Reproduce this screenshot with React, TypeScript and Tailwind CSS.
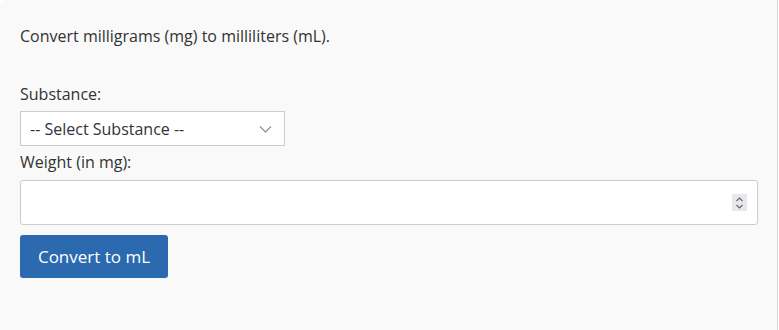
export default function App() {
  return (
    <div className="h-[330px] w-[779px] bg-white font-['Open_Sans',sans-serif] text-[#333]">
      <div className="h-full w-[778px] rounded-tl-md border-r border-[#d8d8d8] bg-[#f9f9f9] px-5 pt-6">
        <p className="mb-[34px] text-base leading-6">Convert milligrams (mg) to milliliters (mL).</p>
        <label className="block text-base leading-6">Substance:</label>
        <div className="relative mt-[5px] h-[35px] w-[265px] border border-[#ccc] bg-white">
          <span className="block px-[9px] pt-[2px] text-base leading-[31px]">-- Select Substance --</span>
          <svg className="absolute right-[12px] top-[13px]" width="13" height="9" viewBox="0 0 13 9">
            <path d="M1 1.5 L6.5 7 L12 1.5" fill="none" stroke="#9a9a9a" strokeWidth="1.4" />
          </svg>
        </div>
        <label className="mt-1 block text-base leading-6">Weight (in mg):</label>
        <div className="relative mt-[6px] h-[45px] w-[738px] rounded-[3px] border border-[#ccc] bg-white">
          <input type="text" className="h-full w-full bg-transparent px-3 outline-none" />
          <div className="absolute right-[10px] top-[13px] flex h-[17px] w-[15px] flex-col items-center justify-center bg-[#e8e8ec]">
            <svg width="9" height="14" viewBox="0 0 9 14">
              <path d="M1.5 5 L4.5 2 L7.5 5" fill="none" stroke="#666" strokeWidth="1.1" />
              <path d="M1.5 9 L4.5 12 L7.5 9" fill="none" stroke="#666" strokeWidth="1.1" />
            </svg>
          </div>
        </div>
        <button className="mt-[10px] h-[43px] w-[148px] rounded-[3px] bg-[#2b6aae] text-[17px] text-white">
          Convert to mL
        </button>
      </div>
    </div>
  );
}
